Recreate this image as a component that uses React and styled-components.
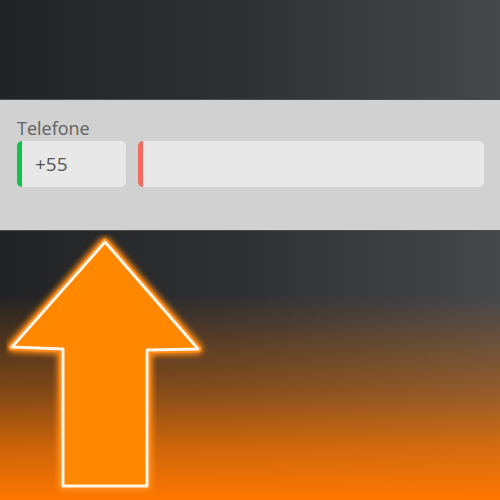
import React from "react";
import styled, { createGlobalStyle } from "styled-components";

const GlobalStyle = createGlobalStyle`
  html, body {
    margin: 0;
    padding: 0;
    width: 500px;
    height: 500px;
    overflow: hidden;
  }
  body {
    font-family: "Open Sans", "Noto Sans", sans-serif;
    background:
      linear-gradient(
        to bottom,
        rgba(255, 119, 0, 0) 59%,
        rgba(255, 119, 0, 0.15) 66%,
        rgba(255, 119, 0, 0.42) 78%,
        rgba(255, 119, 0, 0.78) 90%,
        #ff7700 100%
      ),
      linear-gradient(to right, #222324 0%, #2e2f31 45%, #45474a 100%);
  }
`;

const Page = styled.div`
  width: 500px;
  height: 500px;
  display: flex;
  flex-direction: column;
`;

const Top = styled.div`
  height: 99px;
  flex-shrink: 0;
`;

const Panel = styled.section`
  height: 132px;
  flex-shrink: 0;
  background: #d1d1d1;
  border-top: 1px solid #4a4b4d;
  border-bottom: 1px solid #4a4b4d;
  padding: 16px 16px 0 17px;
  box-sizing: border-box;
  display: flex;
  flex-direction: column;
  gap: 1px;
`;

const Label = styled.label`
  font-size: 18px;
  color: #626262;
  line-height: 24px;
`;

const Row = styled.div`
  display: flex;
  gap: 12px;
`;

const Field = styled.div`
  height: 46px;
  width: ${(p) => (p.$grow ? "auto" : "109px")};
  flex: ${(p) => (p.$grow ? "1" : "none")};
  background: #e8e8e8;
  border-radius: 5px;
  border-left: 5px solid ${(p) => p.$accent};
  box-sizing: border-box;
  display: flex;
  align-items: center;
  padding-left: 13px;
  font-size: 19px;
  color: #555;
`;

const Bottom = styled.div`
  flex: 1;
  min-height: 0;
  padding: 3px 0 0 6px;
`;

const ArrowSvg = styled.svg`
  display: block;
`;

const Arrow = () => (
  <ArrowSvg width="210" height="262" viewBox="6 235 210 262">
    <defs>
      <filter id="glow" x="-30%" y="-30%" width="160%" height="160%">
        <feGaussianBlur stdDeviation="3.5" result="b" />
        <feMerge>
          <feMergeNode in="b" />
          <feMergeNode in="b" />
          <feMergeNode in="SourceGraphic" />
        </feMerge>
      </filter>
    </defs>
    <polygon
      points="105,243 198,350 147,351 147,487 63,487 63,350 12,348"
      fill="#ff8800"
      stroke="#ff8a1a"
      strokeWidth="7"
      strokeLinejoin="round"
      filter="url(#glow)"
    />
    <polygon
      points="105,243 198,350 147,351 147,487 63,487 63,350 12,348"
      fill="#ff8800"
      stroke="#fff6e8"
      strokeWidth="3"
      strokeLinejoin="round"
    />
  </ArrowSvg>
);

export default function App() {
  return (
    <Page>
      <GlobalStyle />
      <Top />
      <Panel>
        <Label>Telefone</Label>
        <Row>
          <Field $accent="#13c04f">+55</Field>
          <Field $accent="#f26b62" $grow />
        </Row>
      </Panel>
      <Bottom>
        <Arrow />
      </Bottom>
    </Page>
  );
}
